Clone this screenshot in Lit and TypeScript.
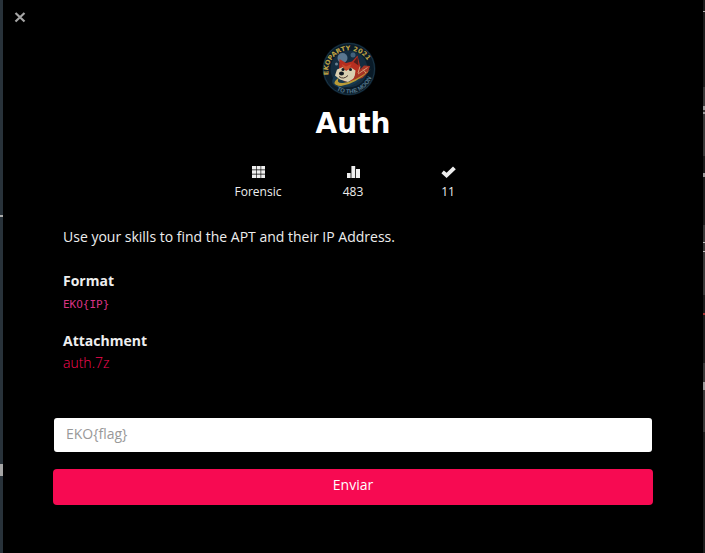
import { LitElement, html, css, svg } from "lit";
import { customElement, state } from "lit/decorators.js";

const icons = {
  grid: svg`<path d="M0 0h4v3.4H0zM4.6 0h4v3.4h-4zM9.2 0h3.8v3.4H9.2zM0 4.3h4v3.4H0zM4.6 4.3h4v3.4h-4zM9.2 4.3h3.8v3.4H9.2zM0 8.6h4V12H0zM4.6 8.6h4V12h-4zM9.2 8.6h3.8V12H9.2z" transform="translate(1)"/>`,
  bars: svg`<path d="M1 7h3.6v5H1zM5.4 0h3.8v12H5.4zM10 3h4v9h-4z"/>`,
  check: svg`<path d="M.4 7.2 2.8 4.6 5.6 6.8 12 .4 14.8 3.2 5.6 12z"/>`,
};

@customElement("team-badge")
export class TeamBadge extends LitElement {
  static styles = css`
    :host { display: block; }
    .badge { display: block; width: 54px; height: 54px; }
    .arc { font: bold 13px "DejaVu Sans", sans-serif; fill: #c0a545; }
    .arc.low { font: bold 12px "Liberation Sans", sans-serif; fill: #55788d; }
  `;
  render() {
    return html`<svg class="badge" viewBox="0 0 108 108" role="img" aria-label="Ekoparty 2021 To The Moon">
      <defs>
        <path id="top" d="M13 66A42 42 0 0 1 96 52" />
        <path id="bottom" d="M29 96A49 49 0 0 0 102 46" />
      </defs>
      <circle cx="54" cy="54" r="53" fill="#0a1b28" />
      <circle cx="54" cy="54" r="51" fill="none" stroke="#1a3546" stroke-width="2" />
      <circle cx="54" cy="54" r="37" fill="#142d40" />
      <circle cx="41" cy="32" r="10" fill="#5b7890" />
      <circle cx="62" cy="26" r="5" fill="#41617b" />
      <circle cx="29" cy="44" r="3" fill="#6a8294" />
      <path d="M23 70Q14 86 35 91Q53 94 77 76L80 60 39 55z" fill="#173a50" />
      <path d="M34 54 35 34 48 42 60 39 71 27 76 47 78 62 67 77 45 79 31 66z" fill="#b62e20" />
      <path d="M63 40 71 30 73 47z" fill="#531d1b" />
      <path d="M30 55 42 50 48 58 58 51 67 57 65 72 52 80 36 75 26 67z" fill="#d9cfb1" />
      <path d="M40 44 48 49 59 44 54 55 43 55z" fill="#c84d2c" />
      <circle cx="42" cy="55" r="3" fill="#111c23" /><circle cx="57" cy="55" r="3" fill="#111c23" />
      <ellipse cx="39" cy="63" rx="5" ry="4" fill="#111820" />
      <path d="M34 69Q43 76 52 67" fill="none" stroke="#4a3830" stroke-width="2" />
      <path d="M67 65 84 47 96 48 92 61 81 72 61 77z" fill="#a63425" />
      <path d="M72 64 91 51M82 55l6 7M76 49l-4 13" stroke="#d49a74" stroke-width="2" />
      <path d="M34 71Q14 86 38 88Q66 85 98 54Q67 79 42 82Q27 83 34 71" fill="#b99b37" />
      <text class="arc"><textPath href="#top">EKOPARTY 2021</textPath></text>
      <text class="arc low"><textPath href="#bottom">TO THE MOON</textPath></text>
    </svg>`;
  }
}

@customElement("app-root")
export class AppRoot extends LitElement {
  @state() private stats = [
    { icon: icons.grid, label: "Forensic" },
    { icon: icons.bars, label: "483" },
    { icon: icons.check, label: "11" },
  ];

  static styles = css`
    * { box-sizing: border-box; }
    :host {
      display: grid;
      grid-template-columns: 3px 1fr 2px;
      min-height: 100vh;
      background: #000;
      color: #eee;
      font: 14px/20px "Open Sans", "Noto Sans", sans-serif;
    }
    .left {
      background: linear-gradient(#aaa, #aaa) 0 215px / 3px 2px no-repeat,
        linear-gradient(#a5a5a5, #a5a5a5) 0 464px / 3px 12px no-repeat, #28323a;
    }
    .right {
      background: linear-gradient(#aaa, #aaa) 0 11px / 2px 1px no-repeat,
        linear-gradient(#999, #999) 0 106px / 2px 4px no-repeat,
        linear-gradient(#999, #999) 0 112px / 2px 2px no-repeat,
        linear-gradient(#999, #999) 0 173px / 2px 4px no-repeat,
        linear-gradient(#bbb, #bbb) 0 242px / 2px 1px no-repeat,
        linear-gradient(#bbb, #bbb) 0 251px / 2px 1px no-repeat,
        linear-gradient(#a33, #a33) 0 313px / 2px 2px no-repeat,
        linear-gradient(#999, #999) 0 382px / 2px 8px no-repeat,
        linear-gradient(#1b1b1b 87px, #383838 87px 156px, #1b1b1b 156px 225px, #383838 225px 295px, #1b1b1b 295px 363px, #383838 363px 432px, #1b1b1b 432px);
    }
    .dialog { position: relative; padding: 42px 50px 48px; }
    .close {
      position: absolute; top: 8px; left: 8px;
      display: grid; place-items: center;
      width: 18px; height: 18px; padding: 0;
      border: 0; background: none;
    }
    .close-icon { display: block; width: 12px; height: 12px; }
    .head { display: flex; flex-direction: column; align-items: center; }
    .logo { padding-right: 8px; }
    .title { margin: 10px 0 0; font: bold 28px/36px "DejaVu Sans", sans-serif; color: #fff; }
    .stats { display: flex; justify-content: center; margin: 24px 0 0; padding: 0; list-style: none; }
    .stat { display: flex; flex-direction: column; align-items: center; gap: 4px; width: 95px; font-size: 12px; line-height: 20px; }
    .stat-icon { display: block; width: 15px; height: 12px; fill: #eee; }
    .info { padding: 0 10px; margin-top: 25px; }
    .text { margin: 0; }
    .label { margin: 24px 0 0; font-size: 14px; line-height: 20px; font-weight: 700; }
    .label + * { margin-top: 2px; }
    .code { display: block; font: 11px/24px "DejaVu Sans Mono", monospace; color: #d63384; }
    .label.second { margin-top: 14px; }
    .file { display: block; color: #f70a52; text-decoration: none; font-weight: 300; }
    .form { display: flex; flex-direction: column; gap: 17px; margin-top: 45px; }
    .flag {
      display: block; margin: 0 1px; height: 34px; padding: 0 12px 4px;
      border: 0; border-radius: 3px; background: #fff; color: #333; font: inherit;
    }
    .flag::placeholder { color: #999; opacity: 1; }
    .send { height: 36px; padding: 0 0 4px; border: 0; border-radius: 4px; background: #f70a52; color: #fff; font: inherit; }
  `;

  render() {
    return html`
      <div class="left"></div>
      <main class="dialog">
        <button class="close" aria-label="Close">
          <svg class="close-icon" viewBox="0 0 12 12"><path d="M1.5 2 10.5 10.5M10.5 2 1.5 10.5" stroke="#a5a5a5" stroke-width="2.2" /></svg>
        </button>
        <header class="head">
          <team-badge class="logo"></team-badge>
          <h1 class="title">Auth</h1>
        </header>
        <ul class="stats">
          ${this.stats.map((s) => html`<li class="stat">
            <svg class="stat-icon" viewBox="0 0 15 12" aria-hidden="true">${s.icon}</svg>
            <span>${s.label}</span>
          </li>`)}
        </ul>
        <section class="info">
          <p class="text">Use your skills to find the APT and their IP Address.</p>
          <h2 class="label">Format</h2>
          <code class="code">EKO{IP}</code>
          <h2 class="label second">Attachment</h2>
          <a class="file" href="#auth">auth.7z</a>
        </section>
        <form class="form" @submit=${(e: Event) => e.preventDefault()}>
          <input class="flag" type="text" aria-label="Flag" placeholder="EKO{flag}" />
          <button class="send" type="submit">Enviar</button>
        </form>
      </main>
      <div class="right"></div>
    `;
  }
}
